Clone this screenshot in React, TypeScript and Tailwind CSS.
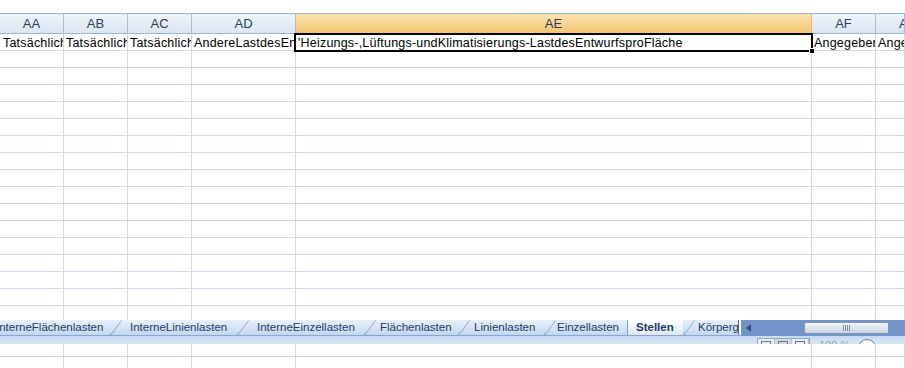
import React from 'react'

interface Column {
    name: string
    w: string
    text?: string
    pad: string
}

const COLUMNS: Column[] = [
    { name: 'AA', w: 'w-[64px]', text: 'TatsächlicheLast', pad: 'pl-[3px]' },
    { name: 'AB', w: 'w-[64px]', text: 'TatsächlicheLast', pad: 'pl-[2px]' },
    { name: 'AC', w: 'w-[64px]', text: 'TatsächlicheLast', pad: 'pl-[2px]' },
    { name: 'AD', w: 'w-[104px]', text: 'AndereLastdesEntwurfs', pad: 'pl-[2px]' },
    { name: 'AE', w: 'w-[516px]', text: "'Heizungs-,Lüftungs-undKlimatisierungs-LastdesEntwurfsproFläche", pad: 'pl-[2px]' },
    { name: 'AF', w: 'w-[64px]', text: 'Angegeben', pad: 'pl-[2px]' },
    { name: 'AG', w: 'w-[29px]', text: 'Angegeben', pad: 'pl-[2px]' },
]

const TABS = [
    { label: 'InterneFlächenlasten', w: 'w-[130px]', pl: 'pl-[16px]' },
    { label: 'InterneLinienlasten', w: 'w-[127px]', pl: 'pl-[20px]' },
    { label: 'InterneEinzellasten', w: 'w-[127px]', pl: 'pl-[20px]' },
    { label: 'Flächenlasten', w: 'w-[94px]', pl: 'pl-[16px]' },
    { label: 'Linienlasten', w: 'w-[86px]', pl: 'pl-[16px]' },
    { label: 'Einzellasten', w: 'w-[83px]', pl: 'pl-[13px]' },
    { label: 'Stellen', w: 'w-[56px]', pl: 'pl-[8px]', active: true },
    { label: 'Körpergewichte', w: 'w-[56px]', pl: 'pl-[15px]' },
]

// empty grid row, h = total height incl. bottom line
function GridRow({ h, line = true }: { h: string; line?: boolean }) {
    return (
        <div className={`flex shrink-0 ${h} ${line ? 'border-b border-[#d0d7e5]' : ''}`}>
            {COLUMNS.map(c => (
                <div key={c.name} className={`${c.w} shrink-0 border-r border-[#d0d7e5]`} />
            ))}
        </div>
    )
}

function Slant() {
    return (
        <svg width="12" height="16" viewBox="0 0 12 16" className="absolute left-0 top-0">
            <path d="M0 16 L0 12 L3 16 Z" fill="#9db4d6" />
            <path d="M0.5 15.5 L11.5 0.5" stroke="#8fa9d0" strokeWidth="1" fill="none" />
        </svg>
    )
}

export default function App() {
    return (
        <div className="w-[905px] h-[368px] overflow-hidden bg-white flex flex-col font-['Liberation_Sans',Arial,sans-serif]">
            <div className="h-[13px] shrink-0" />

            {/* column headers */}
            <div className="flex h-[21px] shrink-0 border-t border-[#9eb6ce]">
                {COLUMNS.map(c => (
                    <div
                        key={c.name}
                        className={`${c.w} shrink-0 border-r flex items-center overflow-hidden whitespace-nowrap text-[13px] text-[#27415f] ${
                            c.name === 'AG' ? 'justify-start pl-[23px]' : 'justify-center'
                        } ${
                            c.name === 'AE'
                                ? 'bg-gradient-to-b from-[#fbe2b3] to-[#f3c66f] border-b border-b-[#f29536] border-r-[#f0b75a]'
                                : 'bg-gradient-to-b from-[#eef3fa] to-[#dbe5f1] border-b border-b-[#9eb6ce] border-r-[#a9bfd6]'
                        }`}
                    >
                        {c.name}
                    </div>
                ))}
            </div>

            {/* row 1 */}
            <div className="flex h-[17px] shrink-0 border-b border-[#d0d7e5]">
                {COLUMNS.map(c => (
                    <div key={c.name} className={`${c.w} relative shrink-0 border-r border-[#d0d7e5]`}>
                        <div className={`${c.pad} h-full overflow-hidden whitespace-nowrap text-[12.5px] tracking-[0.2px] leading-[18px] text-black`}>
                            {c.text}
                        </div>
                        {c.name === 'AE' && (
                            <>
                                <div className="absolute left-[-2px] top-[-1px] right-[-2px] bottom-[-2px] border-2 border-black" />
                                <div className="absolute right-[-4px] bottom-[-4px] w-[6px] h-[6px] bg-black border border-white" />
                            </>
                        )}
                    </div>
                ))}
            </div>

            {Array.from({ length: 15 }).map((_, i) => (
                <GridRow key={i} h="h-[17px]" />
            ))}
            <GridRow h="h-[14px]" line={false} />

            {/* sheet tabs + horizontal scrollbar */}
            <div className="flex h-[16px] shrink-0 bg-gradient-to-b from-[#e8f0fa] to-[#c4d7f0] border-b border-[#8aa5cf]">
                <div className="flex w-[741px] shrink-0 overflow-hidden">
                    <div className="flex -ml-[20px]">
                        {TABS.map(t => (
                            <div
                                key={t.label}
                                className={`${t.w} ${t.pl} relative shrink-0 overflow-hidden whitespace-nowrap text-[11.5px] leading-[15px] text-[#1e3a68] ${
                                    t.active ? 'font-bold bg-gradient-to-b from-white to-[#dbe7f6] border-l border-[#7f9bc6]' : ''
                                }`}
                            >
                                {!t.active && <Slant />}
                                {t.label}
                            </div>
                        ))}
                    </div>
                </div>
                <div className="w-[3px] shrink-0 bg-white border-l border-[#4a6a99] -ml-[3px]" />
                <div className="flex-1 flex items-center bg-[#7394c8] -mb-px">
                    <svg width="12" height="10" viewBox="0 0 12 10" className="ml-[2px]">
                        <path d="M8 1 L3 5 L8 9 Z" fill="#2f4b78" />
                    </svg>
                    <div className="ml-[49px] w-[85px] h-[12px] rounded-[2px] border border-[#8496b1] bg-gradient-to-b from-[#f3f6fa] to-[#cad4e2] flex items-center justify-center gap-[1px]">
                        {[0, 1, 2, 3].map(i => (
                            <div key={i} className="w-px h-[6px] bg-[#7b8aa3]" />
                        ))}
                    </div>
                </div>
            </div>

            {/* status strip */}
            <div className="flex h-[8px] shrink-0 overflow-hidden bg-gradient-to-b from-[#c7daf3] to-[#d9e6f6]">
                <div className="w-[757px] shrink-0" />
                <div className="flex h-[14px] border border-[#9aa9bf] bg-[#e7edf5] mt-[2px]">
                    {[0, 1, 2].map(i => (
                        <div key={i} className={`w-[17px] border-r border-[#b3c0d3] flex justify-center pt-[2px] ${i === 1 ? 'bg-[#cfd8e4]' : ''}`}>
                            <div className="w-[10px] h-[8px] border border-[#6b7a91]" />
                        </div>
                    ))}
                </div>
                <div className="w-px bg-[#d0d7e5]" />
                <span className="ml-[8px] mt-[3px] text-[11px] text-[#8fa0b8] leading-[12px]">100 %</span>
                <div className="ml-[8px] mt-[3px] w-[18px] h-[18px] rounded-full border border-[#6d7f9b] bg-white" />
                <div className="flex-1" />
            </div>

            <GridRow h="h-[13px]" />
            <GridRow h="h-[17px]" />
        </div>
    )
}
